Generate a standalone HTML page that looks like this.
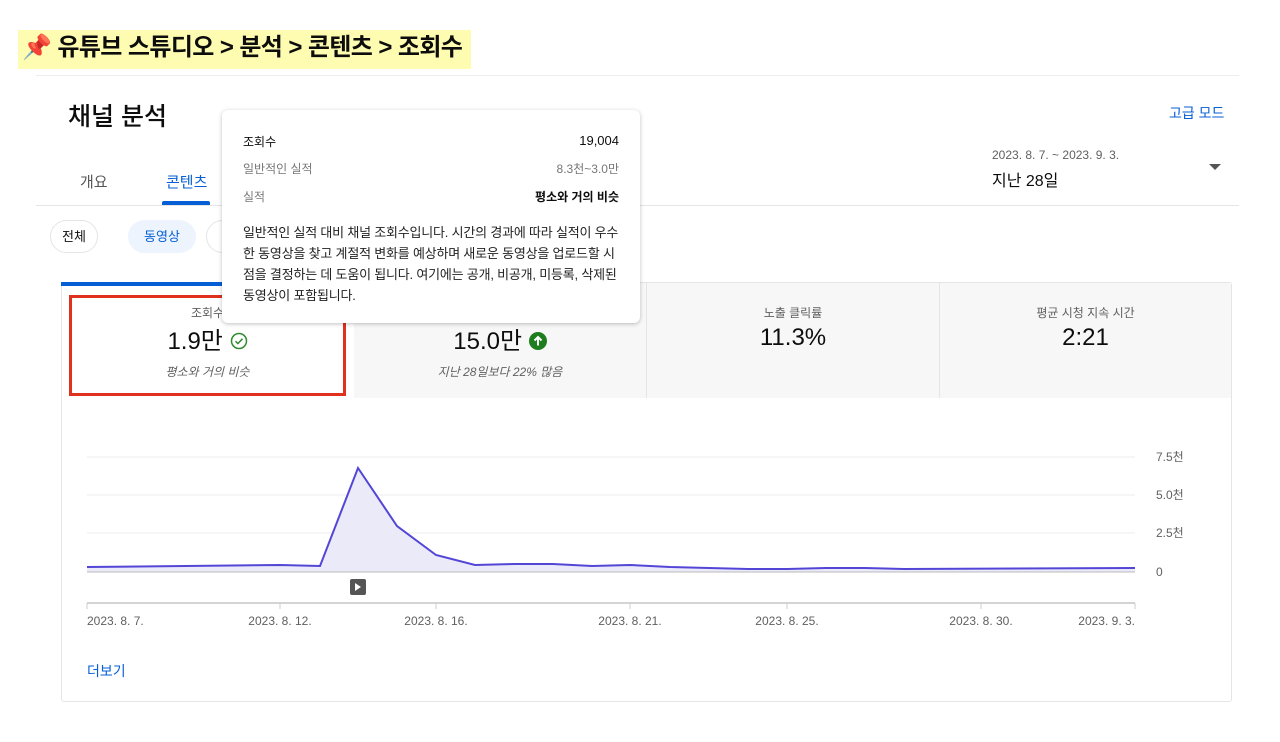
<!DOCTYPE html>
<html><head><meta charset="utf-8"><style>
*{margin:0;padding:0;box-sizing:border-box}
body{width:1280px;height:742px;background:#fff;font-family:"Liberation Sans","Noto Sans CJK KR",sans-serif;position:relative;overflow:hidden;color:#0d0d0d}
.a{position:absolute}
</style></head><body>
<div class="a" style="left:18px;top:30px;width:453px;height:39px;background:#fdfcb0"></div>
<div class="a" style="left:22px;top:32px;font-size:24px;font-weight:bold;letter-spacing:-0.6px;line-height:32px;white-space:nowrap">📌 유튜브 스튜디오 &gt; 분석 &gt; 콘텐츠 &gt; 조회수</div>
<div class="a" style="left:36px;top:75px;width:1203px;height:1px;background:#eee"></div>
<div class="a" style="left:68px;top:97px;font-size:25px;font-weight:500">채널 분석</div>
<div class="a" style="left:1169px;top:103px;font-size:14px;color:#065fd4">고급 모드</div>
<div class="a" style="left:80px;top:171px;font-size:15px;color:#555">개요</div>
<div class="a" style="left:166px;top:171px;font-size:15px;color:#065fd4">콘텐츠</div>
<div class="a" style="left:162px;top:201px;width:48px;height:4px;background:#065fd4;border-radius:2px 2px 0 0"></div>
<div class="a" style="left:36px;top:205px;width:1203px;height:1px;background:#e5e5e5"></div>
<div class="a" style="left:992px;top:148px;font-size:12px;color:#606060">2023. 8. 7. ~ 2023. 9. 3.</div>
<div class="a" style="left:992px;top:167px;font-size:16px">지난 28일</div>
<div class="a" style="left:1209px;top:164px;width:0;height:0;border-left:6px solid transparent;border-right:6px solid transparent;border-top:6px solid #555"></div>
<div class="a" style="left:50px;top:220px;width:48px;height:33px;border:1px solid #e5e5e5;border-radius:17px;font-size:13px;text-align:center;line-height:31px">전체</div>
<div class="a" style="left:128px;top:220px;width:68px;height:33px;background:#eef4fd;border-radius:17px;font-size:13px;text-align:center;line-height:33px;color:#065fd4">동영상</div>
<div class="a" style="left:206px;top:220px;width:30px;height:33px;border:1px solid #e5e5e5;border-radius:17px 0 0 17px"></div>
<div class="a" style="left:61px;top:282px;width:1171px;height:420px;border:1px solid #e5e5e5;border-radius:3px"></div>
<div class="a" style="left:61px;top:282px;width:292px;height:4px;background:#065fd4"></div>
<div class="a" style="left:354px;top:283px;width:877px;height:115px;background:#f7f7f7"></div>
<div class="a" style="left:646px;top:283px;width:1px;height:115px;background:#e5e5e5"></div>
<div class="a" style="left:939px;top:283px;width:1px;height:115px;background:#e5e5e5"></div>
<div class="a" style="left:62px;top:304px;width:291px;text-align:center;font-size:12px;color:#606060">조회수</div>
<div class="a" style="left:62px;top:321px;width:291px;text-align:center;font-size:24px">1.9만 <svg width="18" height="18" viewBox="0 0 18 18" style="vertical-align:-1px"><circle cx="9" cy="9" r="7.5" fill="none" stroke="#2e8b2e" stroke-width="1.5"/><path d="M5.5 9.2l2.4 2.4 4.6-4.8" fill="none" stroke="#2e8b2e" stroke-width="1.5"/></svg></div>
<div class="a" style="left:62px;top:363px;width:291px;text-align:center;font-size:12px;font-style:italic;color:#606060">평소와 거의 비슷</div>
<div class="a" style="left:354px;top:321px;width:292px;text-align:center;font-size:24px">15.0만 <svg width="18" height="18" viewBox="0 0 18 18" style="vertical-align:-1px"><circle cx="9" cy="9" r="9" fill="#1e7e1e"/><path d="M9 13.5V5M5.5 8.5L9 5l3.5 3.5" fill="none" stroke="#fff" stroke-width="2"/></svg></div>
<div class="a" style="left:354px;top:363px;width:292px;text-align:center;font-size:12px;font-style:italic;color:#606060">지난 28일보다 22% 많음</div>
<div class="a" style="left:647px;top:304px;width:292px;text-align:center;font-size:12px;color:#606060">노출 클릭률</div>
<div class="a" style="left:647px;top:324px;width:292px;text-align:center;font-size:24px">11.3%</div>
<div class="a" style="left:940px;top:304px;width:291px;text-align:center;font-size:12px;color:#606060">평균 시청 지속 시간</div>
<div class="a" style="left:940px;top:324px;width:291px;text-align:center;font-size:24px">2:21</div>
<div class="a" style="left:69px;top:295px;width:277px;height:101px;border:3px solid #e0301e"></div>
<svg class="a" style="left:0;top:0" width="1280" height="742">
<g stroke="#ececec" stroke-width="1"><line x1="87" y1="457" x2="1135" y2="457"/><line x1="87" y1="495" x2="1135" y2="495"/><line x1="87" y1="533" x2="1135" y2="533"/></g>
<polygon fill="#ebeaf8" points="87,572 87,567 280,565 320,566 358,468 397,526 436,555 475,565 515,564 553,564 592,566 630,565 670,567 709,568 748,569 787,569 826,568 865,568 904,569 1135,568 1135,572"/>
<polyline fill="none" stroke="#5346d6" stroke-width="2" points="87,567 280,565 320,566 358,468 397,526 436,555 475,565 515,564 553,564 592,566 630,565 670,567 709,568 748,569 787,569 826,568 865,568 904,569 1135,568"/>
<line x1="87" y1="572" x2="1135" y2="572" stroke="#bbb"/>
<line x1="87" y1="603" x2="1135" y2="603" stroke="#aaa"/>
<g stroke="#ccc"><line x1="87" y1="603" x2="87" y2="609"/><line x1="280" y1="603" x2="280" y2="609"/><line x1="436" y1="603" x2="436" y2="609"/><line x1="630" y1="603" x2="630" y2="609"/><line x1="787" y1="603" x2="787" y2="609"/><line x1="981" y1="603" x2="981" y2="609"/><line x1="1135" y1="603" x2="1135" y2="609"/></g>
<rect x="350" y="579" width="16" height="16" rx="2" fill="#555"/><path d="M355 583v8l6-4z" fill="#fff"/>
<g font-size="12" fill="#606060" font-family="Liberation Sans, Noto Sans CJK KR, sans-serif">
<text x="1156" y="461">7.5천</text><text x="1156" y="499">5.0천</text><text x="1156" y="537">2.5천</text><text x="1156" y="576">0</text>
<text x="87" y="625">2023. 8. 7.</text><text x="280" y="625" text-anchor="middle">2023. 8. 12.</text><text x="436" y="625" text-anchor="middle">2023. 8. 16.</text><text x="630" y="625" text-anchor="middle">2023. 8. 21.</text><text x="787" y="625" text-anchor="middle">2023. 8. 25.</text><text x="981" y="625" text-anchor="middle">2023. 8. 30.</text><text x="1135" y="625" text-anchor="end">2023. 9. 3.</text>
</g></svg>
<div class="a" style="left:87px;top:661px;font-size:14px;color:#065fd4">더보기</div>
<div class="a" style="left:222px;top:110px;width:418px;height:213px;background:#fff;border-radius:6px;box-shadow:0 1px 4px rgba(0,0,0,.25)"></div>
<div class="a" style="left:243px;top:133px;font-size:12px">조회수</div>
<div class="a" style="left:400px;top:133px;width:219px;text-align:right;font-size:13px">19,004</div>
<div class="a" style="left:243px;top:160px;font-size:12px;color:#777">일반적인 실적</div>
<div class="a" style="left:400px;top:160px;width:219px;text-align:right;font-size:12px;color:#777">8.3천~3.0만</div>
<div class="a" style="left:243px;top:188px;font-size:12px;color:#777">실적</div>
<div class="a" style="left:400px;top:188px;width:219px;text-align:right;font-size:12px;font-weight:bold">평소와 거의 비슷</div>
<div class="a" style="left:243px;top:222px;width:378px;font-size:13px;line-height:21px;color:#222;letter-spacing:-0.2px;word-break:break-all">일반적인 실적 대비 채널 조회수입니다. 시간의 경과에 따라 실적이 우수한 동영상을 찾고 계절적 변화를 예상하며 새로운 동영상을 업로드할 시점을 결정하는 데 도움이 됩니다. 여기에는 공개, 비공개, 미등록, 삭제된 동영상이 포함됩니다.</div>
</body></html>
